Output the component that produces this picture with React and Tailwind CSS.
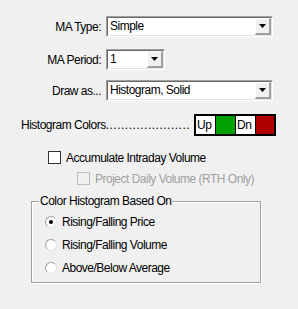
import React from "react";

function Select({ value, width }) {
  return (
    <div
      className={`${width} h-[21px] flex border border-t-[#a0a0a0] border-l-[#a0a0a0] border-r-white border-b-white`}
    >
      <div className="flex-1 flex border border-t-[#696969] border-l-[#696969] border-r-[#e3e3e3] border-b-[#e3e3e3] bg-white">
        <span className="flex-1 pl-[2px] leading-[17px]">{value}</span>
        <div className="w-[16px] h-full flex items-center justify-center bg-[#f0f0f0] border border-t-white border-l-white border-r-[#a0a0a0] border-b-[#a0a0a0] border-r-2 border-b-2">
          <svg width="7" height="4" viewBox="0 0 7 4">
            <polygon points="0,0 7,0 3.5,4" fill="#000" />
          </svg>
        </div>
      </div>
    </div>
  );
}

function Checkbox({ disabled }) {
  return (
    <div
      className={`w-[13px] h-[13px] border ${
        disabled ? "border-[#bcbcbc] bg-[#f0f0f0]" : "border-[#333] bg-white"
      }`}
    />
  );
}

function Radio({ checked }) {
  return (
    <div className="w-[12px] h-[12px] rounded-full border border-t-[#a0a0a0] border-l-[#a0a0a0] border-r-[#e3e3e3] border-b-[#e3e3e3] bg-white flex items-center justify-center">
      {checked && <div className="w-[4px] h-[4px] rounded-full bg-black" />}
    </div>
  );
}

export default function App() {
  const radios = [
    { label: "Rising/Falling Price", checked: true },
    { label: "Rising/Falling Volume", checked: false },
    { label: "Above/Below Average", checked: false },
  ];

  return (
    <div className="w-[298px] h-[309px] bg-[#f0f0f0] text-[12px] tracking-[-0.5px] leading-[14px] text-black font-['Tahoma','Liberation_Sans',sans-serif] pt-[16px]">
      {/* combos */}
      <div className="flex items-center h-[21px]">
        <div className="w-[101px] text-right">MA Type:</div>
        <div className="ml-[5px]">
          <Select value="Simple" width="w-[167px]" />
        </div>
      </div>
      <div className="flex items-center h-[21px] mt-[12px]">
        <div className="w-[101px] text-right">MA Period:</div>
        <div className="ml-[5px]">
          <Select value="1" width="w-[59px]" />
        </div>
      </div>
      <div className="flex items-center h-[21px] mt-[10px]">
        <div className="w-[101px] text-right">Draw as...</div>
        <div className="ml-[5px]">
          <Select value="Histogram, Solid" width="w-[167px]" />
        </div>
      </div>

      {/* histogram colors */}
      <div className="flex items-center h-[22px] mt-[13px] pl-[21px]">
        <div className="w-[173px] whitespace-nowrap">
          Histogram Colors
          <span className="tracking-[0.5px]">......................</span>
        </div>
        <div className="flex h-[22px] border-2 border-black">
          <div className="w-[19px] bg-white leading-[18px] pl-[1px]">Up</div>
          <div className="w-[20px] bg-[#00a000] border-l border-black" />
          <div className="w-[20px] bg-white border-l border-black leading-[18px] pl-[1px]">Dn</div>
          <div className="w-[19px] bg-[#b00000] border-l border-black" />
        </div>
      </div>

      {/* checkboxes */}
      <div className="flex items-center h-[13px] mt-[15px] pl-[48px]">
        <Checkbox />
        <span className="ml-[5px]">Accumulate Intraday Volume</span>
      </div>
      <div className="flex items-center h-[13px] mt-[8px] pl-[77px]">
        <Checkbox disabled />
        <span className="ml-[5px] text-[#a0a0a0]">Project Daily Volume (RTH Only)</span>
      </div>

      {/* group box */}
      <div className="ml-[31px] mt-[16px] w-[230px] h-[82px] border border-[#a0a0a0] shadow-[inset_1px_1px_0_#fff,1px_1px_0_#fff] relative">
        <span className="absolute -top-[8px] left-[7px] px-[1px] bg-[#f0f0f0] leading-[15px]">
          Color Histogram Based On
        </span>
        <div className="flex flex-col gap-[9px] pt-[13px] pl-[13px]">
          {radios.map((r) => (
            <div key={r.label} className="flex items-center h-[14px]">
              <Radio checked={r.checked} />
              <span className="ml-[5px]">{r.label}</span>
            </div>
          ))}
        </div>
      </div>
    </div>
  );
}
